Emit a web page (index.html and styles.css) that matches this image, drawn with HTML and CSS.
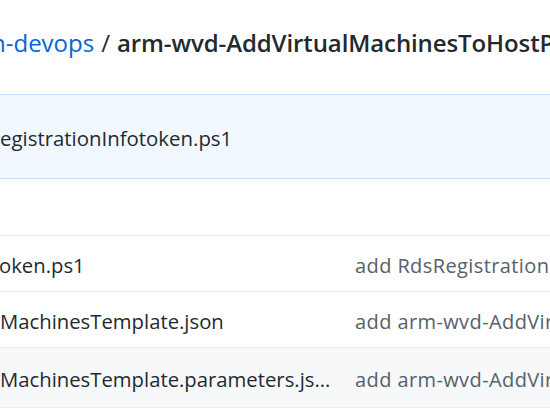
FILE: index.html
```html
<!DOCTYPE html>
<html lang="en">
<head>
<meta charset="utf-8">
<title>arm-wvd-AddVirtualMachinesToHostPool</title>
<link rel="stylesheet" href="styles.css">
</head>
<body>
<div class="page">
  <header class="repohead">
    <h1 class="repo-title"><a class="owner" href="#">n-devops</a><span class="sep">/</span><strong class="repo">arm-wvd-AddVirtualMachinesToHostPool</strong></h1>
  </header>
  <div class="commit-tease">
    <span class="tease-text">egistrationInfotoken.ps1</span>
  </div>
  <div class="files">
    <div class="row row-up"></div>
    <div class="row">
      <div class="name"><span class="cut">oken.ps1</span></div>
      <div class="msg">add RdsRegistrationInfotoken.ps1</div>
    </div>
    <div class="row">
      <div class="name">MachinesTemplate.json</div>
      <div class="msg">add arm-wvd-AddVirtualMachinesTemplate.json</div>
    </div>
    <div class="row row-hover">
      <div class="name">MachinesTemplate.parameters.json</div>
      <div class="msg">add arm-wvd-AddVirtualMachinesTemplate.parameters.json</div>
    </div>
  </div>
</div>
</body>
</html>
```
FILE: styles.css
```css
html, body {
  margin: 0;
  padding: 0;
  background: #ffffff;
}
body {
  font-family: "Open Sans", "Noto Sans", "Liberation Sans", sans-serif;
  color: #24292e;
  overflow: hidden;
  width: 550px;
  height: 419px;
}
.page {
  width: 550px;
  overflow: hidden;
}
.repohead {
  height: 94px;
  display: flex;
  align-items: flex-start;
  overflow: hidden;
}
.repo-title {
  margin: 0;
  padding-top: 23px;
  font-size: 24px;
  font-weight: 400;
  line-height: 40px;
  white-space: nowrap;
}
.owner {
  color: #0366d6;
  text-decoration: none;
  margin-left: -9px;
}
.sep {
  margin: 0 7px;
  color: #24292e;
}
.repo {
  font-weight: 600;
  color: #24292e;
  letter-spacing: -0.1px;
}
.commit-tease {
  height: 83px;
  background: #f1f8ff;
  border-top: 1px solid #c8e1ff;
  border-bottom: 1px solid #c8e1ff;
  display: flex;
  align-items: center;
  font-size: 20.4px;
  white-space: nowrap;
  overflow: hidden;
}
.tease-text {
  display: block;
  margin-top: 3px;
}
.row {
  height: 56px;
  border-bottom: 1px solid #eaecef;
  display: grid;
  grid-template-columns: 355px 1fr;
  align-items: center;
  font-size: 20.3px;
  white-space: nowrap;
  overflow: hidden;
  padding-top: 3px;
  box-sizing: border-box;
}
.row-up {
  height: 57px;
}
.row-hover {
  background: #f6f8fa;
  height: 60px;
}
.name {
  width: 332px;
  overflow: hidden;
  text-overflow: ellipsis;
  color: #24292e;
}
.cut {
  display: inline-block;
  margin-left: -1px;
}
.msg {
  overflow: hidden;
  color: #586069;
  font-size: 20px;
  letter-spacing: 0.4px;
}
```
